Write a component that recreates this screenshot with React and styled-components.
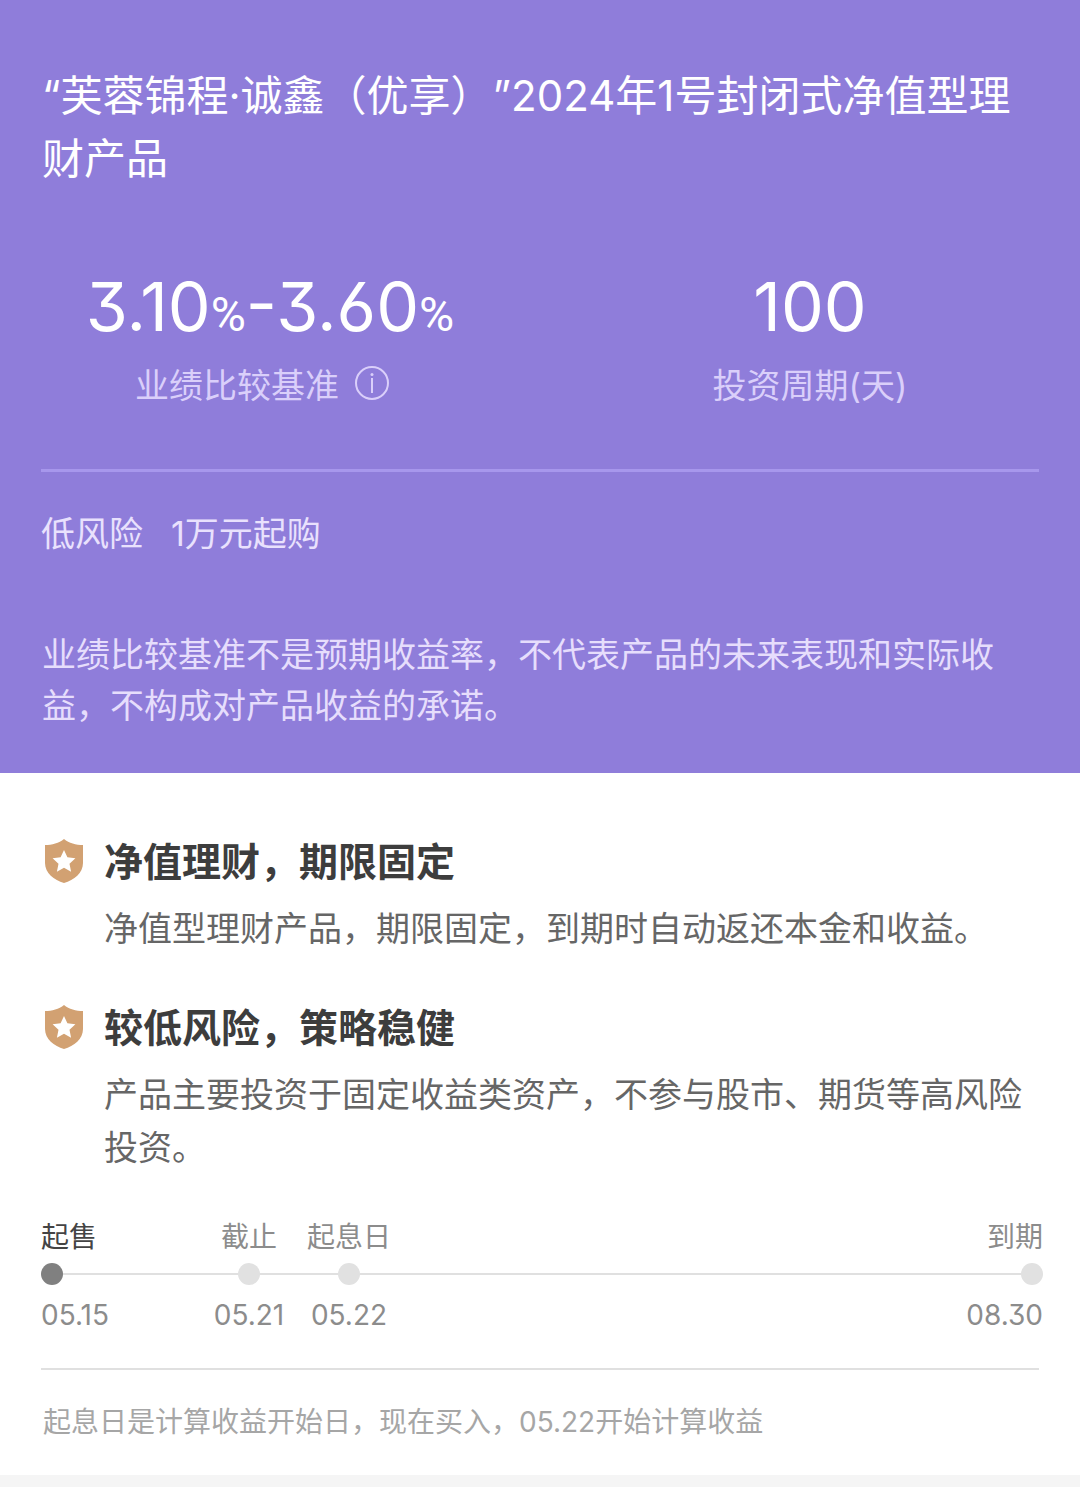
import React from 'react';
import styled, { createGlobalStyle } from 'styled-components';

const GlobalStyle = createGlobalStyle`
  * {
    box-sizing: border-box;
  }

  body {
    margin: 0;
    background: #f5f5f5;
    color: #3d3d3d;
    font-family: Inter, "Noto Sans CJK SC", sans-serif;
    font-feature-settings: "cv03", "cv09";
    text-spacing-trim: space-all;
  }

  h1, h2, p, dl, dt, dd, ol, ul {
    margin: 0;
    padding: 0;
    list-style: none;
  }
`;

const Page = styled.main`
  background: #fff;
`;

const Hero = styled.header`
  padding: 64px 0 42px;
  background: #8f7dda;
  color: #fff;
`;

const Title = styled.h1`
  padding: 0 42px;
  font-size: 42px;
  font-weight: 400;
  line-height: 63px;
`;

const Stats = styled.dl`
  display: grid;
  grid-template-columns: 1fr 1fr;
  margin-top: 76px;
`;

const Stat = styled.div`
  display: flex;
  flex-direction: column-reverse;
  align-items: center;
`;

const StatValue = styled.dd`
  font-size: 68px;
  line-height: 80px;
  white-space: nowrap;

  small {
    font-family: Roboto, sans-serif;
    font-size: 48px;
    line-height: 1;
  }
`;

const StatLabel = styled.dt`
  display: flex;
  align-items: center;
  gap: 16px;
  height: 74px;
  padding-right: ${({ $info }) => ($info ? '16px' : '0')};
  color: #dacffa;
  font-size: 34px;
`;

const InfoButton = styled.button`
  display: flex;
  padding: 0;
  border: 0;
  background: none;
  color: inherit;
  cursor: pointer;
`;

const Tags = styled.ul`
  display: flex;
  gap: 28px;
  margin: 49px 41px 0;
  padding-top: 37px;
  border-top: 3px solid #a797ec;
  color: #e9e1fd;
  font-size: 34px;
  line-height: 50px;
`;

const Notice = styled.p`
  margin-top: 70px;
  padding: 0 42px;
  color: #e6ddfc;
  font-size: 34px;
  line-height: 51px;
`;

const Body = styled.div`
  padding: 62px 41px 32px;
`;

const Features = styled.ul`
  display: grid;
  gap: 46px;
`;

const Feature = styled.li`
  display: grid;
  grid-template-columns: 46px 1fr;
  column-gap: 17px;
  align-items: center;
`;

const FeatureTitle = styled.h2`
  font-size: 39px;
  font-weight: 700;
  line-height: 54px;
`;

const FeatureText = styled.p`
  grid-column: 2;
  margin-top: 13px;
  color: #666;
  font-size: 34px;
  line-height: 53px;
`;

const Timeline = styled.ol`
  display: grid;
  grid-template-columns: 158fr 100fr 100fr 644fr;
  margin: 42px -4px 0 0;
`;

const Stop = styled.li`
  display: flex;
  flex-direction: column;
  align-items: ${({ $align }) => $align};
  color: #8c8c8c;
  font-size: 28px;
  line-height: 42px;
  white-space: nowrap;

  time {
    margin-top: 4px;
  }
`;

const StopName = styled.span`
  color: ${({ $active }) => ($active ? '#444' : '#8c8c8c')};
`;

const Track = styled.span`
  display: flex;
  align-items: center;
  align-self: stretch;
  height: 32px;
`;

const Line = styled.i`
  flex: 1;
  height: 2px;
  background: #e0e0e0;
`;

const Dot = styled.i`
  width: 22px;
  height: 22px;
  border-radius: 50%;
  background: ${({ $active }) => ($active ? '#808080' : '#e1e1e1')};
`;

const Footnote = styled.p`
  margin-top: 32px;
  padding: 31px 0 0 2px;
  border-top: 2px solid #e0e0e0;
  color: #a6a6a6;
  font-size: 28px;
  line-height: 42px;
`;

const InfoIcon = () => (
  <svg width="34" height="34" viewBox="0 0 34 34" fill="none" stroke="currentColor" strokeWidth="2" aria-hidden="true">
    <circle cx="17" cy="17" r="16" />
    <path d="M17 12v15" />
    <circle cx="17" cy="8.5" r="1.5" fill="currentColor" stroke="none" />
  </svg>
);

const ShieldIcon = () => (
  <svg width="46" height="46" viewBox="0 0 46 46" aria-hidden="true">
    <path
      d="M23 0C18 4 11 6 4 6V24C4 34 13 41 23 44C33 41 42 34 42 24V6C35 6 28 4 23 0Z"
      fill="#d2a172"
    />
    <path
      d="M23 11L26.4 18.3L34.4 19.3L28.5 24.8L30.1 32.7L23 28.8L15.9 32.7L17.5 24.8L11.6 19.3L19.6 18.3Z"
      fill="#fff"
    />
  </svg>
);

const features = [
  {
    title: '净值理财，期限固定',
    text: '净值型理财产品，期限固定，到期时自动返还本金和收益。',
  },
  {
    title: '较低风险，策略稳健',
    text: '产品主要投资于固定收益类资产，不参与股市、期货等高风险投资。',
  },
];

const stops = [
  { name: '起售', date: '05.15', align: 'flex-start', active: true },
  { name: '截止', date: '05.21', align: 'center' },
  { name: '起息日', date: '05.22', align: 'center' },
  { name: '到期', date: '08.30', align: 'flex-end' },
];

const App = () => (
  <Page lang="zh-CN">
    <GlobalStyle />
    <Hero>
      <Title>“芙蓉锦程·诚鑫（优享）”2024年1号封闭式净值型理财产品</Title>
      <Stats>
        <Stat>
          <StatLabel $info>
            业绩比较基准
            <InfoButton type="button" aria-label="业绩比较基准说明">
              <InfoIcon />
            </InfoButton>
          </StatLabel>
          <StatValue>3.10<small>%</small>-3.60<small>%</small></StatValue>
        </Stat>
        <Stat>
          <StatLabel>投资周期(天)</StatLabel>
          <StatValue>100</StatValue>
        </Stat>
      </Stats>
      <Tags>
        <li>低风险</li>
        <li>1万元起购</li>
      </Tags>
      <Notice>
        业绩比较基准不是预期收益率，不代表产品的未来表现和实际收益，不构成对产品收益的承诺。
      </Notice>
    </Hero>
    <Body>
      <Features>
        {features.map(({ title, text }) => (
          <Feature key={title}>
            <ShieldIcon />
            <FeatureTitle>{title}</FeatureTitle>
            <FeatureText>{text}</FeatureText>
          </Feature>
        ))}
      </Features>
      <Timeline>
        {stops.map(({ name, date, align, active }, i) => (
          <Stop key={name} $align={align}>
            <StopName $active={active}>{name}</StopName>
            <Track>
              {i > 0 && <Line />}
              <Dot $active={active} />
              {i < stops.length - 1 && <Line />}
            </Track>
            <time>{date}</time>
          </Stop>
        ))}
      </Timeline>
      <Footnote>起息日是计算收益开始日，现在买入，05.22开始计算收益</Footnote>
    </Body>
  </Page>
);

export default App;
